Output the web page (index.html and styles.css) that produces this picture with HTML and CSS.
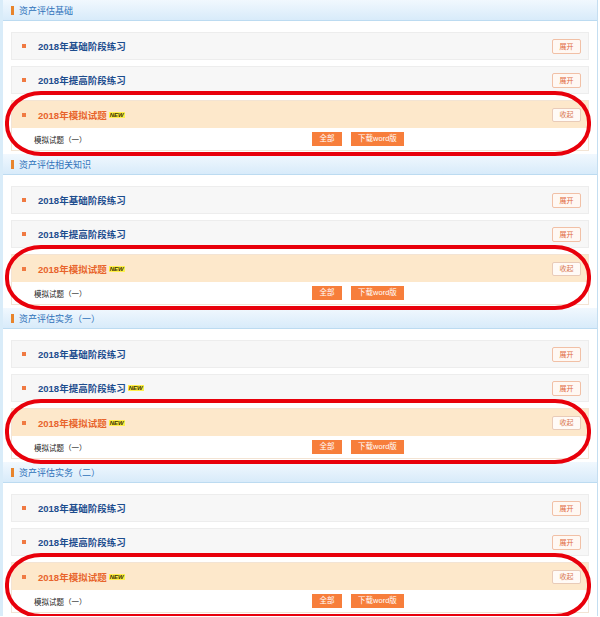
FILE: index.html
```html
<!DOCTYPE html>
<html lang="zh-CN">
<head>
    <meta charset="UTF-8">
    <title>资产评估练习</title>
    <link rel="stylesheet" href="styles.css">
</head>
<body>
    <div class="page">
        <div class="section">
            <div class="section-head"><span class="mark"></span>资产评估基础</div>
            <div class="section-body">
                <div class="row"><span class="dot"></span><span class="row-title">2018年基础阶段练习</span><span class="toggle">展开</span></div>
                <div class="row"><span class="dot"></span><span class="row-title">2018年提高阶段练习</span><span class="toggle">展开</span></div>
                <div class="group">
                    <div class="row row-open"><span class="dot"></span><span class="row-title">2018年模拟试题<span class="new">NEW</span></span><span class="toggle">收起</span></div>
                    <div class="sub">
                        <span class="sub-title">模拟试题（一）</span>
                        <span class="btn">全部</span>
                        <span class="btn btn-wide">下载word版</span>
                    </div>
                </div>
            </div>
        </div>
        <div class="section">
            <div class="section-head"><span class="mark"></span>资产评估相关知识</div>
            <div class="section-body">
                <div class="row"><span class="dot"></span><span class="row-title">2018年基础阶段练习</span><span class="toggle">展开</span></div>
                <div class="row"><span class="dot"></span><span class="row-title">2018年提高阶段练习</span><span class="toggle">展开</span></div>
                <div class="group">
                    <div class="row row-open"><span class="dot"></span><span class="row-title">2018年模拟试题<span class="new">NEW</span></span><span class="toggle">收起</span></div>
                    <div class="sub">
                        <span class="sub-title">模拟试题（一）</span>
                        <span class="btn">全部</span>
                        <span class="btn btn-wide">下载word版</span>
                    </div>
                </div>
            </div>
        </div>
        <div class="section">
            <div class="section-head"><span class="mark"></span>资产评估实务（一）</div>
            <div class="section-body">
                <div class="row"><span class="dot"></span><span class="row-title">2018年基础阶段练习</span><span class="toggle">展开</span></div>
                <div class="row"><span class="dot"></span><span class="row-title">2018年提高阶段练习<span class="new">NEW</span></span><span class="toggle">展开</span></div>
                <div class="group">
                    <div class="row row-open"><span class="dot"></span><span class="row-title">2018年模拟试题<span class="new">NEW</span></span><span class="toggle">收起</span></div>
                    <div class="sub">
                        <span class="sub-title">模拟试题（一）</span>
                        <span class="btn">全部</span>
                        <span class="btn btn-wide">下载word版</span>
                    </div>
                </div>
            </div>
        </div>
        <div class="section">
            <div class="section-head"><span class="mark"></span>资产评估实务（二）</div>
            <div class="section-body">
                <div class="row"><span class="dot"></span><span class="row-title">2018年基础阶段练习</span><span class="toggle">展开</span></div>
                <div class="row"><span class="dot"></span><span class="row-title">2018年提高阶段练习</span><span class="toggle">展开</span></div>
                <div class="group">
                    <div class="row row-open"><span class="dot"></span><span class="row-title">2018年模拟试题<span class="new">NEW</span></span><span class="toggle">收起</span></div>
                    <div class="sub">
                        <span class="sub-title">模拟试题（一）</span>
                        <span class="btn">全部</span>
                        <span class="btn btn-wide">下载word版</span>
                    </div>
                </div>
            </div>
        </div>
    </div>
</body>
</html>
```

FILE: styles.css
```css
* {
    box-sizing: border-box;
    margin: 0;
    padding: 0;
}
body {
    font-family: 'Liberation Sans', 'Noto Sans CJK SC', sans-serif;
    background-color: #ffffff;
}
.page {
    width: 598px;
    border-left: 3px solid #d9ecf9;
    border-right: 1px solid #c4def1;
    background-color: #ffffff;
}
.section {
    height: 154px;
}
.section-head {
    height: 21px;
    display: flex;
    align-items: center;
    padding-left: 8px;
    background: linear-gradient(#f1f8fe, #d8ebfa);
    border-bottom: 1px solid #bcdbf1;
    color: #2f72ba;
    font-size: 9px;
}
.mark {
    width: 3px;
    height: 9px;
    background-color: #e8842c;
    margin-right: 5px;
}
.section-body {
    padding: 11px 8px 4px;
    display: flex;
    flex-direction: column;
    gap: 6px;
}
.row {
    height: 28px;
    display: flex;
    align-items: center;
    padding: 0 7px 0 10px;
    background-color: #f7f7f7;
    border: 1px solid #ededed;
}
.dot {
    width: 4px;
    height: 4px;
    background-color: #f07a42;
    margin-right: 12px;
}
.row-title {
    flex: 1;
    font-size: 9.5px;
    font-weight: bold;
    color: #1d4d8e;
    display: flex;
    align-items: center;
}
.new {
    font-size: 6px;
    font-style: italic;
    font-weight: bold;
    line-height: 6px;
    color: #3a3000;
    background-color: #fff04a;
    margin-left: 2px;
    padding: 0 1px;
}
.toggle {
    width: 29px;
    height: 15px;
    line-height: 13px;
    text-align: center;
    font-size: 7px;
    color: #e0683c;
    background-color: #fff8f3;
    border: 1px solid #f1c0a6;
    border-radius: 2px;
}
.group {
    position: relative;
    border: 1px solid #f3e4d4;
}
.group::after {
    content: '';
    position: absolute;
    top: -10px;
    left: -7px;
    right: -3px;
    bottom: -6px;
    border: 4px solid #e8000b;
    border-radius: 36px / 31px;
}
.row-open {
    height: 27px;
    border: none;
    padding-left: 10px;
    background-color: #fde8cb;
}
.row-open .row-title {
    color: #e8642c;
}
.row-open .toggle {
    height: 14px;
    line-height: 12px;
    color: #d9764e;
    background-color: #fffaf6;
    border-color: #e9cbb8;
}
.sub {
    height: 22px;
    display: flex;
    align-items: center;
    padding-left: 22px;
    background-color: #ffffff;
}
.sub-title {
    width: 278px;
    font-size: 7.5px;
    color: #222222;
}
.btn {
    width: 30px;
    height: 14px;
    line-height: 14px;
    text-align: center;
    font-size: 7.5px;
    color: #ffffff;
    background-color: #f77e3b;
    margin-right: 9px;
}
.btn-wide {
    width: 53px;
}
```
